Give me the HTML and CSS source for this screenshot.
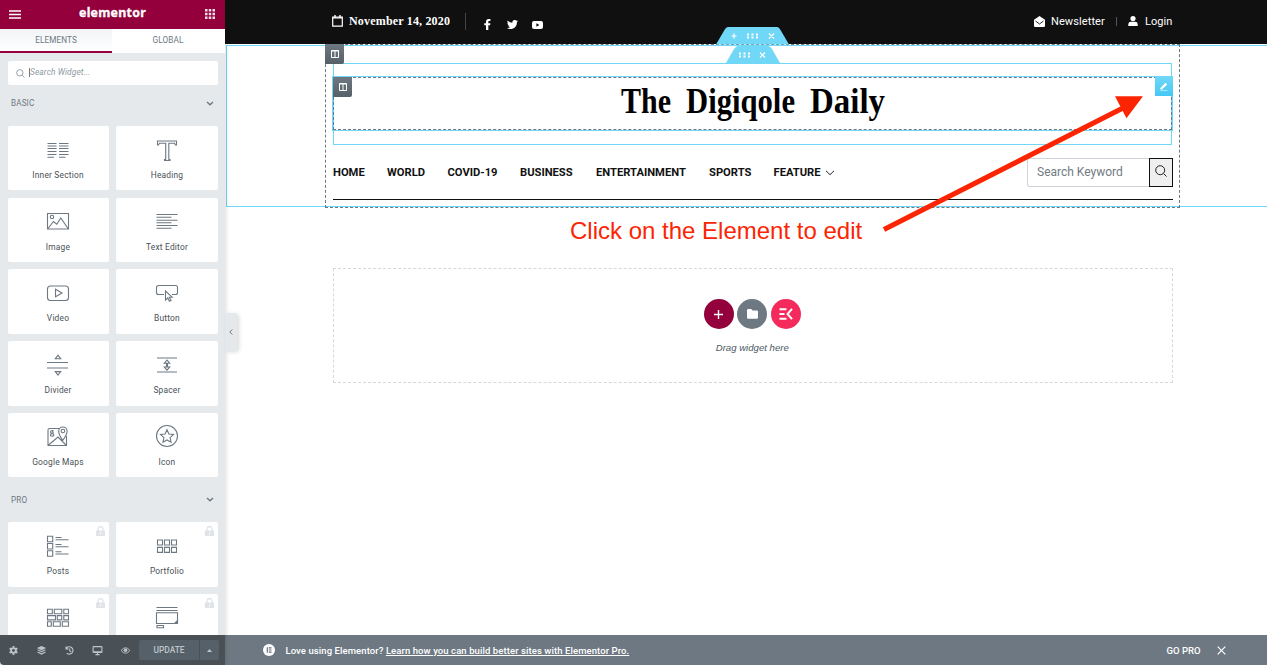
FILE: index.html
```html
<!DOCTYPE html>
<html lang="en">
<head>
<meta charset="utf-8">
<title>Elementor</title>
<link rel="stylesheet" href="styles.css">
</head>
<body>
<div class="app">
  <aside class="panel">
    <header class="panel-header">
      <svg class="burger" width="12" height="9" viewBox="0 0 12 9"><path d="M0 1h12M0 4.500h12M0 8h12" stroke="#fff" stroke-width="1.500"/></svg>
      <span class="brand">elementor</span>
      <svg width="10" height="10" viewBox="0 0 10 10" fill="#f5dfe7"><path d="M0 0h2.500v2.500H0zM3.750 0h2.500v2.500h-2.500zM7.500 0H10v2.500H7.500zM0 3.750h2.500v2.500H0zM3.750 3.750h2.500v2.500h-2.500zM7.500 3.750H10v2.500H7.500zM0 7.500h2.500V10H0zM3.750 7.500h2.500V10h-2.500zM7.500 7.500H10V10H7.500z"/></svg>
    </header>
    <nav class="tabs"><span class="tab active">ELEMENTS</span><span class="tab">GLOBAL</span></nav>
    <div class="search">
      <svg width="9" height="9" viewBox="0 0 9 9" fill="none" stroke="#98a1a9"><circle cx="3.800" cy="3.800" r="3.200"/><path d="M6.200 6.200l2.300 2.300"/></svg>
      <span class="caret"></span><span>Search Widget...</span>
    </div>
    <div class="category"><span>BASIC</span><svg width="8" height="5" viewBox="0 0 8 5"><path d="M1 1l3 2.700L7 1" fill="none" stroke="#6d7882" stroke-width="1.400"/></svg></div>
    <div class="grid">
      <div class="card"><svg class="ico" viewBox="0 0 24 24"><path d="M1.500 5.500h9M13 5.500h9.500M1.500 8h9M13 8h9.500M1.500 10.500h9M13 10.500h9.500M1.500 13.500h9M13 13.500h9.500M1.500 16.500h9M13 16.500h9.500M1.500 19.200h6.500M13 19.200h6.500"/></svg><span>Inner Section</span></div>
      <div class="card"><svg class="ico" viewBox="0 0 24 24"><path d="M2.500 3h19v4h-1l-1-1.800h-5.700V21.500H15v1H9.500v-1h1.200V5.200H4.500L3.500 7h-1z"/></svg><span>Heading</span></div>
      <div class="card"><svg class="ico" viewBox="0 0 24 24"><path d="M1.500 4.500h21v15.500h-21zM2 19.500l5.500-7 3.300 2.700 4-6.200 7.200 10.500"/><circle cx="6" cy="8" r="1.700"/></svg><span>Image</span></div>
      <div class="card"><svg class="ico" viewBox="0 0 24 24"><path d="M1.500 5.500h21M1.500 8.200h15M1.500 11.200h21M1.500 13.700h15M1.500 16.500h21M1.500 19.200h15"/></svg><span>Text Editor</span></div>
      <div class="card"><svg class="ico" viewBox="0 0 24 24"><rect x="1.500" y="5" width="21" height="14.500" rx="3"/><path d="M9.500 8.300v7.400l6.500-3.700z"/></svg><span>Video</span></div>
      <div class="card"><svg class="ico" viewBox="0 0 24 24"><path d="M9 13.500H3.500a2 2 0 0 1-2-2v-5a2 2 0 0 1 2-2h17a2 2 0 0 1 2 2v5a2 2 0 0 1-2 2H17M10.500 10v9l2.300-2 1.600 3.200 1.600-.8-1.600-3.200h2.800z"/></svg><span>Button</span></div>
      <div class="card"><svg class="ico" viewBox="0 0 24 24"><path d="M1 9.500h21M1 15h21M9.300 5.800h5.400L12 2.200zM9.300 18.600h5.400L12 22z"/></svg><span>Divider</span></div>
      <div class="card"><svg class="ico" viewBox="0 0 24 24"><path d="M2 5h20M2 19h20M9.300 10.300h5.400L12 7zM9.300 14h5.400L12 17.200zM11.500 10v4M12.500 10v4"/></svg><span>Spacer</span></div>
      <div class="card"><svg class="ico" viewBox="0 0 24 24"><path d="M13 4.500H3.500a1.500 1.500 0 0 0-1.500 1.500v15.500h18.500V12M2.500 21l9.500-8 8.500 8.500M16.700 16.500s-4-6-4-9.300a4.200 4.200 0 0 1 8.400 0c0 3.300-4.400 9.300-4.400 9.300z"/><circle cx="16.900" cy="7" r="1.800"/><path d="M7.500 7c-1.500-1-3 0-3 1s2 1.500 2.500 1-.3-2-1-2M7 9.500c-2 0-3 1-2.500 2s3 1 3.300 0-.8-1.500-.8-2"/></svg><span>Google Maps</span></div>
      <div class="card"><svg class="ico" viewBox="0 0 24 24"><circle cx="12" cy="12" r="10.500"/><path d="M12 5.700l1.900 4.300 4.600.5-3.400 3.100.9 4.600-4-2.300-4 2.300.9-4.600-3.400-3.100 4.600-.5z"/></svg><span>Icon</span></div>
    </div>
    <div class="category pro"><span>PRO</span><svg width="8" height="5" viewBox="0 0 8 5"><path d="M1 1l3 2.700L7 1" fill="none" stroke="#6d7882" stroke-width="1.400"/></svg></div>
    <div class="grid pro-grid">
      <div class="card"><svg class="lock" viewBox="0 0 9 10"><path d="M0 4.500h9V10H0z" fill="#e0e4e8"/><path d="M2 5V3a2.500 2.500 0 0 1 5 0v2" fill="none" stroke="#e0e4e8" stroke-width="1.300"/><path d="M4.500 6.500v1.700" stroke="#fff"/></svg><svg class="ico" viewBox="0 0 24 24"><path d="M1.500 2.300h5.200v5.500H1.500zM1.500 9.500h5.200v5.500H1.500zM1.500 16.700h5.200v5.500H1.500zM9.500 3.500h6M9.500 5.800h13M9.500 10.500h6M9.500 12.800h13M9.500 17.700h6M9.500 20h13"/></svg><span>Posts</span></div>
      <div class="card"><svg class="lock" viewBox="0 0 9 10"><path d="M0 4.500h9V10H0z" fill="#e0e4e8"/><path d="M2 5V3a2.500 2.500 0 0 1 5 0v2" fill="none" stroke="#e0e4e8" stroke-width="1.300"/><path d="M4.500 6.500v1.700" stroke="#fff"/></svg><svg class="ico" viewBox="0 0 24 24"><path d="M2.500 6h5v5h-5zM9.500 6h5v5h-5zM16.500 6h5v5h-5zM2.500 13.400h5v5h-5zM9.500 13.400h5v5h-5zM16.500 13.400h5v5h-5z"/></svg><span>Portfolio</span></div>
      <div class="card"><svg class="lock" viewBox="0 0 9 10"><path d="M0 4.500h9V10H0z" fill="#e0e4e8"/><path d="M2 5V3a2.500 2.500 0 0 1 5 0v2" fill="none" stroke="#e0e4e8" stroke-width="1.300"/><path d="M4.500 6.500v1.700" stroke="#fff"/></svg><svg class="ico" viewBox="0 0 24 24"><path d="M1.500 3.300h4.800v4.500H1.500zM8.300 3.300h7.500v4.500H8.300zM17.800 3.300h4.700v4.500h-4.700zM1.500 9.600h8v4.300h-8zM11.300 9.600h4.500v4.300h-4.500zM17.800 9.600h4.700v4.300h-4.700zM1.500 15.700h3.800v4.500H1.500zM7.300 15.700h7v4.500h-7zM16.300 15.700h6.200v4.500h-6.200z"/></svg></div>
      <div class="card"><svg class="lock" viewBox="0 0 9 10"><path d="M0 4.500h9V10H0z" fill="#e0e4e8"/><path d="M2 5V3a2.500 2.500 0 0 1 5 0v2" fill="none" stroke="#e0e4e8" stroke-width="1.300"/><path d="M4.500 6.500v1.700" stroke="#fff"/></svg><svg class="ico" viewBox="0 0 24 24"><path d="M1.500 1.500h21M1.500 4.500h21M1.500 6.800h21v10.700h-21zM2 19.500h6.500v2.300H2z"/><path d="M22.500 14.500v3h-3z" fill="#6d7882"/></svg></div>
    </div>
    <footer class="panel-footer">
      <svg class="tool" viewBox="0 0 12 12"><circle cx="6" cy="6" r="2.600" fill="none" stroke="#bdc5cb" stroke-width="2"/><path d="M6 1.200v1.600M6 9.200v1.600M1.800 3.600l1.500.9M8.700 7.500l1.500.9M1.800 8.400l1.500-.9M8.700 4.500l1.500-.9" stroke="#bdc5cb" stroke-width="2"/></svg>
      <svg class="tool" viewBox="0 0 12 12" fill="#bdc5cb"><path d="M6 1l5 2.300-5 2.300-5-2.300zM1 5.500l1.500-.7L6 6.500l3.500-1.700 1.500.7-5 2.500zM1 8l1.500-.7L6 9l3.500-1.700L11 8l-5 2.600z"/></svg>
      <svg class="tool" viewBox="0 0 12 12" fill="none" stroke="#bdc5cb" stroke-width="1.200"><path d="M2.500 3.600a4 4 0 1 1 .5 5.200M2.200 1.500v2.700h2.700M6.200 3.800v2.500l1.600 1"/></svg>
      <svg class="tool" viewBox="0 0 12 12" fill="none" stroke="#bdc5cb" stroke-width="1.200"><rect x="1.200" y="1.800" width="9.600" height="6.300" rx=".6"/><path d="M1.200 7.500h9.600M6 8v2.200M3.700 10.500h4.600"/></svg>
      <svg class="tool" viewBox="0 0 12 12"><path d="M1.200 6q4.800-6 9.600 0-4.800 6-9.600 0z" fill="none" stroke="#bdc5cb" stroke-width="1"/><circle cx="6" cy="5.700" r="2" fill="#bdc5cb"/></svg>
      <div class="update"><span>UPDATE</span><i><svg width="5" height="3" viewBox="0 0 5 3"><path d="M0 3l2.500-3L5 3z" fill="#bdc5cb"/></svg></i></div>
    </footer>
  </aside>

  <main class="preview">
    <div class="topbar">
      <svg class="cal" width="11" height="12" viewBox="0 0 11 12"><path d="M.7 2.200h9.600v9H.7z" fill="none" stroke="#fff" stroke-width="1.200"/><path d="M.7 3h9.600" stroke="#fff"/><path d="M3 0v3M8 0v3" stroke="#fff" stroke-width="1.400"/></svg>
      <span class="date">November 14, 2020</span>
      <i class="bar"></i>
      <svg class="fb" width="7" height="11" viewBox="0 0 7 11"><path d="M2 11V6.200H.3v-2H2V2.800C2 1 3 .1 4.700.1h1.700v1.800H5.300c-.8 0-1 .3-1 1v1.300h2.100l-.3 2H4.300V11z" fill="#fff"/></svg>
      <svg class="tw" width="11" height="9" viewBox="0 0 22 18"><path d="M22 2.200l-2.300.7L21.500.5l-2.800 1A4.600 4.600 0 0 0 10.800 5.500C7 5.400 3.600 3.500 1.300.8.200 3 .7 5.500 2.700 6.800L.7 6.200c0 2.200 1.500 4 3.600 4.500l-2 .1c.6 1.800 2.200 3 4.200 3.100A9 9 0 0 1 0 15.900C9 21 20 16 19.800 4.600z" fill="#fff"/></svg>
      <svg class="yt" width="11" height="8" viewBox="0 0 11 8"><rect width="11" height="8" rx="2" fill="#fff"/><path d="M4.400 2.300v3.400l3-1.700z" fill="#101010"/></svg>
      <div class="account">
        <svg width="11" height="11" viewBox="0 0 11 11"><path d="M5.500 0L11 3.700V9.800q0 1.200-1.200 1.200H1.200Q0 11 0 9.800V3.700z" fill="#fff"/><path d="M1.500 5l4 3 4-3" fill="none" stroke="#101010" stroke-width=".9"/></svg>
        <span>Newsletter</span><i class="bar small"></i>
        <svg width="10" height="10" viewBox="0 0 10 10" fill="#fff"><circle cx="5" cy="2.600" r="2.600"/><path d="M.3 10V8q.3-2.200 2.500-2.200h4.400Q9.400 5.800 9.700 8v2z"/></svg>
        <span class="login">Login</span>
      </div>
    </div>

    <section class="site-header">
      <div class="outline section-line"></div>
      <div class="outline column-line"></div>
      <div class="outline inner-line"></div>
      <svg class="handle outer" width="74" height="18" viewBox="0 0 74 18"><path d="M0 17.500L8.500 3Q10 0 12 0h49q2 0 3.500 3L73 17.500z" fill="#71d7f7"/><path d="M15.500 9h5M18 6.500v5M53 6.500l5 5M58 6.500l-5 5" stroke="#fff" stroke-width="1.200"/><path d="M31 7.500h11M31 10.500h11" stroke="#fff" stroke-width="2" stroke-dasharray="2 2.500"/></svg>
      <svg class="handle inner" width="54" height="17" viewBox="0 0 54 17"><path d="M0 17L8 3Q10 0 12 0h30q2 0 4 3l8 14z" fill="#71d7f7"/><path d="M34 6.500l5 5M39 6.500l-5 5" stroke="#fff" stroke-width="1.200"/><path d="M13 7.500h11M13 10.500h11" stroke="#fff" stroke-width="2" stroke-dasharray="2 2.500"/></svg>
      <b class="col-tag first"><svg width="8" height="8" viewBox="0 0 8 8"><path d="M.5.5h7v7h-7zM4 .5v7M.5 1h7" fill="none" stroke="#fff"/></svg></b>
      <div class="logo-widget">
        <b class="col-tag second"><svg width="8" height="8" viewBox="0 0 8 8"><path d="M.5.5h7v7h-7zM4 .5v7M.5 1h7" fill="none" stroke="#fff"/></svg></b>
        <svg class="logo" width="270" height="44" viewBox="0 0 270 44"><g class="logo-text"><text x="3" y="32" textLength="50" lengthAdjust="spacingAndGlyphs">The</text><text x="68" y="32" textLength="109" lengthAdjust="spacingAndGlyphs">Digiqole</text><text x="192" y="32" textLength="75" lengthAdjust="spacingAndGlyphs">Daily</text></g></svg>
        <b class="edit"><svg width="8" height="9" viewBox="0 0 8 9"><path d="M.3 6L5.500.8l1.700 1.700L2 7.600H.3z" fill="#fff"/><path d="M.5 8.600h7" stroke="#fff" stroke-width=".6"/></svg></b>
      </div>
      <div class="menu-row">
        <nav class="menu"><span class="m1">HOME</span><span class="m2">WORLD</span><span class="m3">COVID-19</span><span class="m4">BUSINESS</span><span class="m5">ENTERTAINMENT</span><span class="m6">SPORTS</span><span class="m7">FEATURE</span><svg width="10" height="6" viewBox="0 0 10 6"><path d="M1 .8l4 3.900L9 .8" fill="none" stroke="#222"/></svg></nav>
        <div class="keyword">Search Keyword</div>
        <button class="go"><svg width="12" height="12" viewBox="0 0 12 12" fill="none" stroke="#222"><circle cx="5.200" cy="5.200" r="4.500"/><path d="M8.500 8.500l3 3"/></svg></button>
      </div>
    </section>

    <p class="note">Click on the Element to edit</p>
    <section class="drop">
      <div class="actions">
        <i class="round add"><svg width="9" height="9" viewBox="0 0 9 9"><path d="M4.500 0v9M0 4.500h9" stroke="#fff" stroke-width="1.400"/></svg></i>
        <i class="round folder"><svg width="11" height="10" viewBox="0 0 11 10"><path d="M1.200 0h3l1.400 1.400h4.200q1.200 0 1.200 1.200V8.500q0 1.200-1.200 1.200H1.200Q0 9.700 0 8.500V1.200Q0 0 1.200 0z" fill="#fff"/></svg></i>
        <i class="round kit"><svg width="14" height="12" viewBox="0 0 14 12" fill="none" stroke="#fff" stroke-width="2"><path d="M.5 1.300H7.500M.5 6H5.500M.5 10.700H7.500M13 .8L8.500 6l4.500 5.200"/></svg></i>
      </div>
      <span class="hint">Drag widget here</span>
    </section>
    <footer class="notice">
      <svg width="12" height="12" viewBox="0 0 12 12"><circle cx="6" cy="6" r="6" fill="#fff"/><path d="M4.300 3.300v5.400M5.800 3.900h2.700M5.800 6h2.700M5.800 8.100h2.700" stroke="#5e6871" stroke-width="1.100"/></svg>
      <span class="love">Love using Elementor? <u>Learn how you can build better sites with Elementor Pro.</u></span>
      <span class="gopro">GO PRO</span>
      <svg width="9" height="9" viewBox="0 0 9 9"><path d="M.7.700l7.600 7.600M8.300.7L.7 8.300" stroke="#fff" stroke-width="1.200"/></svg>
    </footer>
  </main>
  <div class="collapse"><svg width="4" height="6" viewBox="0 0 4 6"><path d="M3.300.4L.8 3l2.500 2.600" fill="none" stroke="#6d7882"/></svg></div>
  <svg class="arrow" width="270" height="145" viewBox="0 0 270 145"><path d="M9 139.500L248 18" stroke="#fc2503" stroke-width="5.200"/><path d="M240 6.200h28L251.500 28.200z" fill="#fc2503"/></svg>
</div>
</body>
</html>
```
FILE: styles.css
```css
* { box-sizing: border-box; }
body { margin: 0; font-family: Roboto, sans-serif; background: #fff; }
svg { flex: none; display: block; }
.app { position: relative; display: flex; width: 1267px; height: 665px; overflow: hidden; }

.panel { width: 225px; height: 665px; background: #e6e9ec; display: flex; flex-direction: column; position: relative; box-shadow: 0 0 5px rgba(0,0,0,.2); overflow: hidden; z-index: 1; }
.panel-header { height: 29px; flex: none; background: #93003c; display: flex; align-items: center; justify-content: space-between; padding: 0 10px 2px 9px; }
.brand { font: 700 12.4px/20px "Noto Sans", sans-serif; -webkit-text-stroke: .3px #fff; color: #fff; letter-spacing: .25px; margin: -2px 1px 0 0; }
.panel-header svg { margin-top: 1px; }
.tabs { display: flex; height: 24px; flex: none; background: #fff; }
.tab { width: 112px; text-align: center; font-size: 8.2px; line-height: 23px; color: #6d7882; letter-spacing: .1px; }
.active { background: linear-gradient(#f1f3f5, #fff); border-bottom: 2px solid #93003c; }
.search { margin: 8px 7px 0 8px; height: 24px; flex: none; background: #fff; border-radius: 2px; display: flex; align-items: center; padding-left: 8px; font: italic 8.400px/20px Roboto, sans-serif; color: #8f99a2; letter-spacing: .1px; }
.caret { width: 1px; height: 9px; background: #777; margin: 0 0 2px 4px; }
.search span + span { margin-top: -2px; }
.category { height: 41px; flex: none; display: flex; align-items: center; justify-content: space-between; padding: 0 11px 5px; font-size: 8.2px; color: #6d7882; letter-spacing: .1px; }
.grid { display: grid; grid-template-columns: 101px 102px; grid-auto-rows: 64.400px; gap: 7.350px 7px; padding: 0 8px; flex: none; }
.pro { height: 45px; padding-bottom: 0; }
.card { position: relative; background: #fff; border-radius: 2px; display: flex; flex-direction: column; align-items: center; padding-top: 11.500px; font-size: 8.400px; line-height: 12px; color: #495157; padding-right: 1px; }
.card:nth-child(even) { padding-right: 0; }
.card > span { margin-top: 7.300px; letter-spacing: .2px; }
.ico { width: 24px; height: 24px; fill: none; stroke: #6d7882; stroke-width: 1.1; }
.lock { position: absolute; right: 4.500px; top: 4px; width: 9px; height: 10px; }
.panel-footer { position: absolute; left: 0; right: 0; bottom: 0; height: 30px; background: #495157; display: flex; align-items: center; padding-left: 8px; border-bottom-left-radius: 4px; }
.tool { width: 11px; height: 11px; margin-right: 17px; }
.update { height: 20px; display: flex; width: 80px; background: #556068; border-radius: 2px; margin-left: -9px; color: #bdc5cb; font-size: 8.400px; line-height: 21px; font-weight: 500; }
.update span { width: 60px; text-align: center; }
.update i { flex: 1; display: flex; align-items: center; justify-content: center; border-left: 1px solid #495157; }
.collapse { position: absolute; z-index: 2; left: 225px; top: 313px; width: 12px; height: 38px; background: #e6e9ec; border-radius: 0 3px 3px 0; display: flex; align-items: center; justify-content: center; box-shadow: 2px 1px 4px rgba(0,0,0,.15); }

.preview { flex: 1; display: flex; flex-direction: column; }
.topbar { height: 44px; background: #101010; display: flex; align-items: center; padding: 0 94.500px 2px 107px; color: #fff; }
.date { font: 700 12px/16px "Liberation Serif", serif; margin-left: 6px; width: 101px; white-space: nowrap; letter-spacing: .18px; }
.bar { width: 1px; height: 17px; background: #444; margin-left: 15px; }
.fb { margin: 7px 0 0 18px; }
.tw { margin: 7px 0 0 16px; }
.yt { margin: 7px 0 0 14px; }
.account { margin-left: auto; display: flex; align-items: center; font-size: 11px; }
.account > span { margin-left: 6px; letter-spacing: .1px; }
.account .small { height: 9px; margin: 0 11px; background: #555; }
.account .login { margin-left: 7px; }

.site-header { position: relative; height: 164px; padding: 32px 94px 0 107px; }
.outline { position: absolute; pointer-events: none; }
.section-line { left: 1px; right: -2px; top: 1px; bottom: 1px; border: 1px solid #71d7f7; }
.column-line { left: 100px; top: 0; width: 855px; height: 164px; border: 1px dashed #6d7882; }
.inner-line { left: 108px; top: 19px; width: 839px; height: 82px; border: 1px solid #71d7f7; }
.handle { position: absolute; z-index: 2; }
.handle.outer { left: 491px; top: -17px; }
.handle.inner { left: 500.500px; top: 2px; }
.col-tag { position: absolute; display: flex; align-items: center; justify-content: center; width: 19px; height: 20px; background: linear-gradient(#6d7882, #556068); border-radius: 0 0 2px 0; }
.first { left: 100px; top: 0; }
.second { left: 0; top: 0; }
.logo-widget { position: relative; height: 55px; border: 1px solid #71d7f7; display: flex; justify-content: center; }
.logo-widget::before { content: ""; position: absolute; inset: 0; border: 1px dashed #6d7882; }
.logo { margin: 4px 0 0 1px; }
.logo-text { font: 700 35px "Liberation Serif", serif; fill: #000; }
.edit { position: absolute; right: -1px; top: -1px; width: 18px; height: 20px; background: linear-gradient(#71d7f7, #45c8f5); display: flex; align-items: center; justify-content: center; }
.menu-row { display: flex; align-items: center; margin: 27px 0 0 1px; height: 42px; border-bottom: 1px solid #101010; padding-bottom: 12px; }
.menu { flex: 1; display: flex; align-items: center; color: #111; font-size: 11.200px; font-weight: 700; white-space: nowrap; }
.m1 { width: 54px; } .m2 { width: 60.500px; } .m3 { width: 72.500px; } .m4 { width: 76px; } .m5 { width: 113px; } .m6 { width: 64.500px; } .m7 { width: 51px; }
.keyword { width: 122px; height: 29px; border: 1px solid #ced4da; border-right: 0; border-radius: 3px 0 0 3px; font-size: 12px; line-height: 27px; color: #727b83; padding-left: 9px; }
.go { width: 24px; height: 29px; background: #efefef; border: 1px solid #111; padding: 0 0 4px; display: flex; align-items: center; justify-content: center; }

.note { font: 24px/30px "Liberation Sans", sans-serif; color: #fc2503; margin: 8px 0 0 345px; white-space: nowrap; }
.drop { margin: 22px 94px 0 108px; height: 115px; border: 1px dashed #d5d8dc; display: flex; flex-direction: column; align-items: center; padding: 30px 1.500px 0 0; }
.actions { display: flex; gap: 3.500px; }
.round { width: 30px; height: 30px; border-radius: 50%; display: flex; align-items: center; justify-content: center; }
.add { background: #93003c; } .folder { background: #6d7882; } .kit { background: #f52a5c; }
.hint { font: italic 9.600px/14px "Liberation Sans", sans-serif; color: #4c5963; margin-top: 12px; }
.notice { margin-top: auto; height: 30px; background: #6d7882; color: #fff; display: flex; align-items: center; padding: 0 41px 0 38px; font-size: 9.500px; font-weight: 500; }
.love { margin-left: 10.500px; letter-spacing: .085px; }
.gopro { margin: 0 16.500px 0 auto; }
.arrow { position: absolute; z-index: 3; left: 875px; top: 90px; }
```
